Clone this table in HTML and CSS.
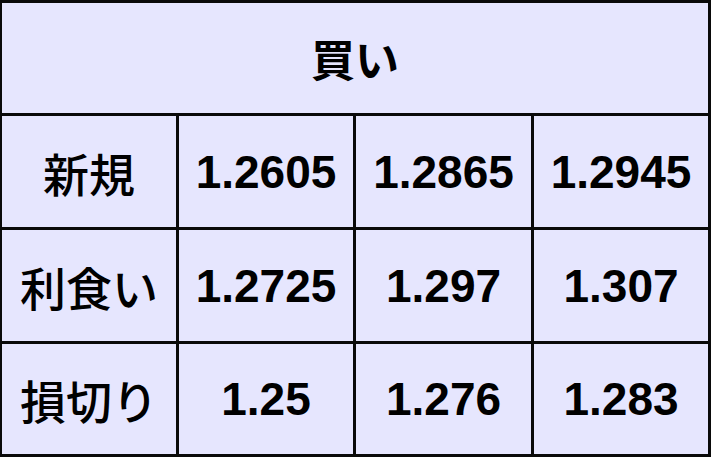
FILE: index.html
```html
<!DOCTYPE html>
<html lang="ja">
<head>
<meta charset="utf-8">
<title>買い</title>
<link rel="stylesheet" href="styles.css">
</head>
<body>
<div class="table">
  <div class="cell head">買い</div>
  <div class="cell label">新規</div>
  <div class="cell">1.2605</div>
  <div class="cell">1.2865</div>
  <div class="cell">1.2945</div>
  <div class="cell label">利食い</div>
  <div class="cell">1.2725</div>
  <div class="cell">1.297</div>
  <div class="cell">1.307</div>
  <div class="cell label">損切り</div>
  <div class="cell">1.25</div>
  <div class="cell">1.276</div>
  <div class="cell">1.283</div>
</div>
</body>
</html>
```
FILE: styles.css
```css
html, body {
  margin: 0;
  padding: 0;
  background: #e6e6fe;
}
.table {
  width: 711px;
  height: 457px;
  box-sizing: border-box;
  display: grid;
  grid-template-columns: 174px 174px 175px 174px;
  grid-template-rows: 110px 111px 111px 110px;
  gap: 3px;
  padding: 3px 3px 3px 2px;
  background: #0a0a0a;
}
.cell {
  background: #e6e6fe;
  display: flex;
  align-items: center;
  justify-content: center;
  font-family: "Liberation Sans", "Noto Sans CJK JP", sans-serif;
  font-weight: bold;
  font-size: 46px;
  color: #000;
}
.head {
  grid-column: 1 / -1;
  font-size: 44px;
}
.label {
  font-family: "Noto Sans CJK JP", sans-serif;
  font-weight: 500;
  font-size: 46px;
}
```
